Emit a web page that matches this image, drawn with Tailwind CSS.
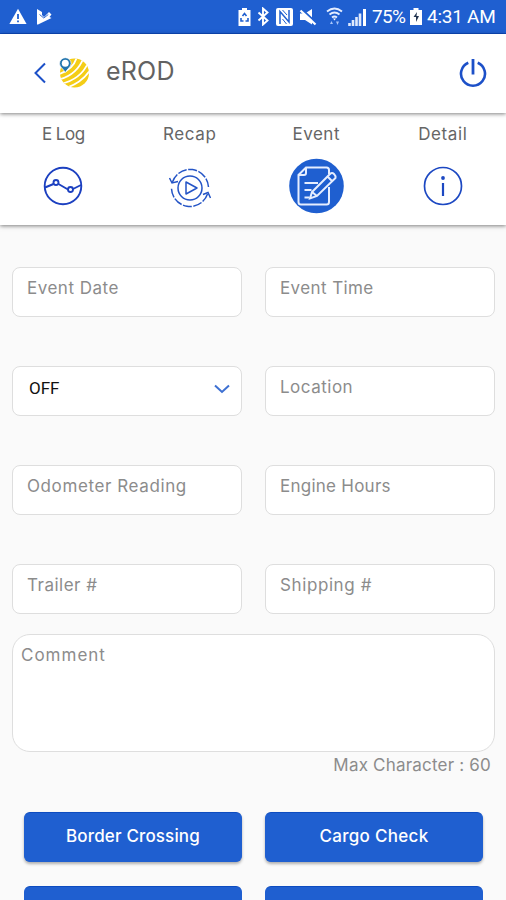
<!DOCTYPE html>
<html lang="en">
<head>
<meta charset="utf-8">
<title>eROD</title>
<script src="https://cdn.jsdelivr.net/npm/@tailwindcss/browser@4"></script>
</head>
<body class="w-[506px] h-[900px] overflow-hidden bg-[#fafafa] font-['Inter',sans-serif] text-[17px] text-[#8c8c8c]">
<div class="flex flex-col h-[900px] overflow-hidden">
  <div class="h-[34px] shrink-0 bg-[#1f5fd0] border-b border-[#0d49bd] flex items-center pl-[9px] pr-[10px] text-white">
    <svg class="w-[18px] h-[17px]" viewBox="0 0 18 17"><path d="M9 .8 17.6 16H.4z" fill="#fff"/><path d="M9 6v5M9 12.4v1.8" stroke="#1f5fd0" stroke-width="1.8"/></svg>
    <svg class="w-[16px] h-[17px] ml-[9px]" viewBox="0 0 16 17"><path d="M1 1 6 4v3l2 2 5-5 2.500 2.500-2 2.500 2 1L2 16.500H1z" fill="#fff"/><path d="m3.500 6.500 4.300 3.500 4.500-3.500" fill="none" stroke="#1f5fd0" stroke-width=".9"/></svg>
    <svg class="w-[13px] h-[18px] ml-auto" viewBox="0 0 13 18"><path d="M4 0h5v2h3.500v16H.5V2H4z" fill="#fff"/><path d="m4.500 8 2-2.500 2 2.500M3 10v3h2.500M10 10v3H7.500" fill="none" stroke="#1f5fd0" stroke-width="1.600"/></svg>
    <svg class="w-[13px] h-[19px] ml-[6px]" viewBox="0 0 13 19"><path d="m1.500 5.500 9 8-4.500 4v-16l4.500 4-9 8" fill="none" stroke="#fff" stroke-width="1.900"/></svg>
    <svg class="w-[17px] h-[18px] ml-[6px]" viewBox="0 0 17 18"><rect width="17" height="18" rx="2" fill="#fff"/><path d="M4 16V3.500l9 10.500V2" fill="none" stroke="#1f5fd0" stroke-width="1.500"/><path d="M6.500 2 11 7M6.500 11l4 5" stroke="#1f5fd0" stroke-width="1"/></svg>
    <svg class="w-[18px] h-[18px] ml-[6px]" viewBox="0 0 18 18"><path d="M1 5.500h5l7-4.500v15.500l-7-4.500H1z" fill="#fff"/><path d="m2 .5 15 14" stroke="#1f5fd0" stroke-width="2"/><path d="m1.500 2.500 15 14" stroke="#fff" stroke-width="2.200"/></svg>
    <svg class="w-[17px] h-[19px] ml-[9px]" viewBox="0 0 17 19"><g fill="none" stroke="#e4edff" stroke-width="1.900"><path d="M1 4.500q7.500-6 15 0M3.500 7.500q5-4 10 0M6 10.500q2.500-2 5 0"/></g><path d="m7 11.500 1.500 2 1.500-2z" fill="#fff"/><path d="m4 17 1.500-3L7 17zm6-2.500h3L11.500 18z" fill="#a9c6fa"/></svg>
    <svg class="w-[19px] h-[18px] ml-[5px]" viewBox="0 0 19 18"><path d="M1.500 15v3M5 12v6M8.500 9v9M12 5.500V18" stroke="#dfe9fd" stroke-width="2.600"/><path d="M16.500 1v17" stroke="#fff" stroke-width="3"/></svg>
    <span class="ml-[5px] w-[34px] text-[19px] leading-[36px] font-['Roboto',sans-serif] tracking-[-0.7px] whitespace-nowrap">75%</span>
    <svg class="w-[12px] h-[17px] ml-[4px]" viewBox="0 0 12 17"><path d="M3.500 0h5v2H12v15H0V2h3.500z" fill="#fff"/><path d="M7 4 3.500 9H6v5l3-6H6.500z" fill="#253650"/></svg>
    <span class="ml-[5px] w-[69px] text-[19px] leading-[36px] font-['Roboto',sans-serif] tracking-[-0.25px] whitespace-nowrap">4:31 AM</span>
  </div>

  <header class="relative z-20 h-[79px] shrink-0 bg-white flex items-center pl-[33px] pr-[19px] pb-[2px] shadow-[0_1px_4px_rgba(0,0,0,0.5)]">
    <svg class="w-[14px] h-[22px]" viewBox="0 0 14 22"><path d="M12 1.500 2.500 11l9.500 9.500" fill="none" stroke="#1c50c8" stroke-width="2"/></svg>
    <svg class="w-[32px] h-[32px] ml-[12px]" viewBox="0 0 32 32">
      <defs><clipPath id="globe"><circle cx="15.500" cy="16" r="14.500"/></clipPath></defs>
      <g clip-path="url(#globe)"><path fill="#f4cd16" d="M0 0h32v32H0z"/><g fill="none" stroke="#fff" stroke-width="1.800"><path d="M0 17Q14 13 18 0M0 22.500Q18 18 24.500 1M2 27Q22 22 29 6M7 31Q23 26 32 12"/></g></g>
      <path d="M6.300 15.500C4.500 12 .5 10 .5 6.500a5.800 5.800 0 0 1 11.600 0c0 3.500-4 5.500-5.800 9z" fill="#2274ad" stroke="#fff" stroke-width=".7"/><circle cx="6.300" cy="6.300" r="3.500" fill="#fff"/>
    </svg>
    <h1 class="ml-[15px] -mt-[4px] text-[25px] leading-[30px] tracking-[0.2px] text-[#626262]">eROD</h1>
    <svg class="w-[28px] h-[30px] ml-auto" viewBox="0 0 28 30"><path d="M9.300 4.700a12 12 0 1 0 9.400 0" fill="none" stroke="#1c50c8" stroke-width="2.600"/><path d="M14 1v15.500" stroke="#1c50c8" stroke-width="2.800"/></svg>
  </header>

  <nav class="relative z-10 h-[112px] shrink-0 bg-white grid grid-cols-4 pt-[11px] shadow-[0_1px_4px_rgba(0,0,0,0.5)] text-[#666] leading-[20px]">
    <div class="flex flex-col items-center"><span class="tracking-[-0.5px]">E Log</span>
      <div class="h-[84px] flex items-center"><svg class="w-[40px] h-[40px]" viewBox="0 0 40 40" fill="none" stroke="#1c40c0" stroke-width="1.900"><circle cx="20" cy="20" r="18.300"/><path d="m2 21.500 8.500-3.500M15.500 18l9.500 5.500M30 23l8-4"/><circle cx="13" cy="16.500" r="2.500"/><circle cx="27.500" cy="23.500" r="2.500"/></svg></div></div>
    <div class="flex flex-col items-center"><span class="tracking-[0.6px]">Recap</span>
      <div class="h-[84px] flex items-center"><svg class="w-[44px] h-[44px] mt-[3px]" viewBox="0 0 44 44" fill="none" stroke="#2454c6" stroke-width="1.500"><circle cx="22" cy="22" r="12"/><path d="m18 16 11 6-11 6z" stroke-linejoin="round"/><path d="M4.500 16A18.500 18.500 0 0 1 40.500 21" stroke-dasharray="9 1.500"/><path d="M39.500 28A18.500 18.500 0 0 1 3.500 22" stroke-dasharray="9 1.500"/><path d="m1.500 12 2.500 5 6-1.500M42.500 32 40 26.500l-5 2"/></svg></div></div>
    <div class="flex flex-col items-center"><span class="tracking-[0.5px]">Event</span>
      <div class="h-[84px] flex items-center"><svg class="w-[55px] h-[56px]" viewBox="0 0 55 56" fill="none" stroke="#e6eeff" stroke-width="2"><circle cx="27.500" cy="28" r="27.300" fill="#1f5fd0" stroke="none"/><path d="M40 16v-4a2.500 2.500 0 0 0-2.500-2.500H17L9.500 17v27a2.500 2.500 0 0 0 2.500 2.500h25.500A2.500 2.500 0 0 0 40 44V29M9.500 17H15a2 2 0 0 0 2-2V9.500"/><path d="M15.500 25H29M15.500 32h7M15.500 39.500h5"/><path d="M23 34 41 16q2-2 4 0t1.500 4L28 38l-7 2.500zM38.500 18.500l5 5M23 34l5 4"/></svg></div></div>
    <div class="flex flex-col items-center"><span class="tracking-[0.6px]">Detail</span>
      <div class="h-[84px] flex items-center"><svg class="w-[40px] h-[40px]" viewBox="0 0 40 40" fill="none" stroke="#1c48c2"><circle cx="20" cy="20" r="18.500" stroke-width="1.700"/><path d="M20 17v13" stroke-width="2.200"/><circle cx="20" cy="12" r="1.900" fill="#1c48c2" stroke="none"/></svg></div></div>
  </nav>

  <main class="pt-[42px] pl-[12px] pr-[11px]">
    <div class="grid grid-cols-2 gap-x-[23px] gap-y-[49px] leading-[20px]">
      <div class="h-[50px] rounded-[8px] border border-[#dedede] bg-white pl-[14px] pt-[10px]"><span class="tracking-[0.5px]">Event Date</span></div>
      <div class="h-[50px] rounded-[8px] border border-[#dedede] bg-white pl-[14px] pt-[10px]"><span class="tracking-[0.4px]">Event Time</span></div>
      <div class="h-[50px] rounded-[8px] border border-[#dedede] bg-white pl-[16px] pr-[11px] pt-[11px] flex justify-between text-[#111]"><span class="font-['Roboto',sans-serif]">OFF</span>
        <svg class="w-[16px] h-[10px] mt-[6px]" viewBox="0 0 16 10"><path d="m1 1.500 7 6.500 7-6.500" fill="none" stroke="#3d70d2" stroke-width="2"/></svg></div>
      <div class="h-[50px] rounded-[8px] border border-[#dedede] bg-white pl-[14px] pt-[10px]"><span class="tracking-[0.5px]">Location</span></div>
      <div class="h-[50px] rounded-[8px] border border-[#dedede] bg-white pl-[14px] pt-[10px]"><span class="tracking-[0.6px]">Odometer Reading</span></div>
      <div class="h-[50px] rounded-[8px] border border-[#dedede] bg-white pl-[14px] pt-[10px]"><span class="tracking-[0.25px]">Engine Hours</span></div>
      <div class="h-[50px] rounded-[8px] border border-[#dedede] bg-white pl-[14px] pt-[10px]"><span class="tracking-[0.5px]">Trailer #</span></div>
      <div class="h-[50px] rounded-[8px] border border-[#dedede] bg-white pl-[14px] pt-[10px]"><span class="tracking-[0.6px]">Shipping #</span></div>
    </div>
    <div class="mt-[20px] h-[118px] rounded-[18px] border border-[#dedede] bg-white pl-[8px] pt-[10px] leading-[20px]"><span class="tracking-[1px]">Comment</span></div>
    <div class="mt-[3px] pr-[4px] text-right leading-[20px]"><span class="tracking-[0.2px]">Max Character : 60</span></div>
    <div class="mt-[37px] px-[12px] grid grid-cols-2 gap-x-[23px] gap-y-[24px] text-white font-medium leading-[46px] text-center">
      <button class="h-[50px] pb-[2px] rounded-[6px] bg-[#1f5fd0] border border-t-[#0d4cc0] border-[#1f5fd0] shadow-[0_2px_3px_rgba(0,0,0,0.3)]"><span class="tracking-[0.15px]">Border Crossing</span></button>
      <button class="h-[50px] pb-[2px] rounded-[6px] bg-[#1f5fd0] border border-t-[#0d4cc0] border-[#1f5fd0] shadow-[0_2px_3px_rgba(0,0,0,0.3)]"><span class="tracking-[0.3px]">Cargo Check</span></button>
      <button class="h-[50px] rounded-[6px] bg-[#1f5fd0] border border-t-[#0d4cc0] border-[#1f5fd0]" aria-label="More"></button>
      <button class="h-[50px] rounded-[6px] bg-[#1f5fd0] border border-t-[#0d4cc0] border-[#1f5fd0]" aria-label="More"></button>
    </div>
  </main>
</div>
</body>
</html>
